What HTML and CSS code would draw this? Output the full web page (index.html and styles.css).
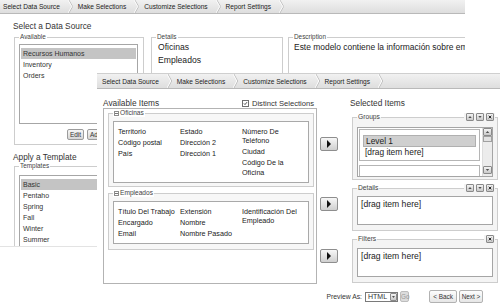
FILE: index.html
```html
<!DOCTYPE html>
<html>
<head>
<meta charset="utf-8">
<title>Report Wizard</title>
<link rel="stylesheet" href="styles.css">
</head>
<body>
<div class="win back">
    <div class="tabs">
        <div class="tab current">Select Data Source<svg class="chev" viewBox="0 0 6 14" preserveAspectRatio="none"><polyline points="1,0 5.5,7 1,14" fill="none" stroke="#b4b4b4"/><polyline points="0,0 4.5,7 0,14" fill="none" stroke="#fff"/></svg></div>
        <div class="tab">Make Selections<svg class="chev" viewBox="0 0 6 14" preserveAspectRatio="none"><polyline points="1,0 5.5,7 1,14" fill="none" stroke="#b4b4b4"/><polyline points="0,0 4.5,7 0,14" fill="none" stroke="#fff"/></svg></div>
        <div class="tab">Customize Selections<svg class="chev" viewBox="0 0 6 14" preserveAspectRatio="none"><polyline points="1,0 5.5,7 1,14" fill="none" stroke="#b4b4b4"/><polyline points="0,0 4.5,7 0,14" fill="none" stroke="#fff"/></svg></div>
        <div class="tab">Report Settings<svg class="chev" viewBox="0 0 6 14" preserveAspectRatio="none"><polyline points="1,0 5.5,7 1,14" fill="none" stroke="#b4b4b4"/><polyline points="0,0 4.5,7 0,14" fill="none" stroke="#fff"/></svg></div>
    </div>
    <div class="page">
        <h2 class="title">Select a Data Source</h2>
        <div class="source-row">
            <fieldset class="box available">
                <legend>Available</legend>
                <ul class="list ds-list">
                    <li class="sel">Recursos Humanos</li>
                    <li>Inventory</li>
                    <li>Orders</li>
                </ul>
                <div class="list-btns">
                    <button class="btn edit">Edit</button>
                    <button class="btn">Add</button>
                </div>
            </fieldset>
            <fieldset class="box details">
                <legend>Details</legend>
                <div class="line">Oficinas</div>
                <div class="line">Empleados</div>
            </fieldset>
            <fieldset class="box desc">
                <legend>Description</legend>
                <div class="line">Este modelo contiene la información sobre empleados y oficinas.</div>
            </fieldset>
        </div>
        <h2 class="title">Apply a Template</h2>
        <fieldset class="box templates">
            <legend>Templates</legend>
            <ul class="list tpl-list">
                <li class="sel">Basic</li>
                <li>Pentaho</li>
                <li>Spring</li>
                <li>Fall</li>
                <li>Winter</li>
                <li>Summer</li>
            </ul>
        </fieldset>
    </div>
</div>

<div class="win front">
    <div class="tabs">
        <div class="tab">Select Data Source<svg class="chev" viewBox="0 0 6 14" preserveAspectRatio="none"><polyline points="1,0 5.5,7 1,14" fill="none" stroke="#b4b4b4"/><polyline points="0,0 4.5,7 0,14" fill="none" stroke="#fff"/></svg></div>
        <div class="tab current">Make Selections<svg class="chev" viewBox="0 0 6 14" preserveAspectRatio="none"><polyline points="1,0 5.5,7 1,14" fill="none" stroke="#b4b4b4"/><polyline points="0,0 4.5,7 0,14" fill="none" stroke="#fff"/></svg></div>
        <div class="tab">Customize Selections<svg class="chev" viewBox="0 0 6 14" preserveAspectRatio="none"><polyline points="1,0 5.5,7 1,14" fill="none" stroke="#b4b4b4"/><polyline points="0,0 4.5,7 0,14" fill="none" stroke="#fff"/></svg></div>
        <div class="tab">Report Settings<svg class="chev" viewBox="0 0 6 14" preserveAspectRatio="none"><polyline points="1,0 5.5,7 1,14" fill="none" stroke="#b4b4b4"/><polyline points="0,0 4.5,7 0,14" fill="none" stroke="#fff"/></svg></div>
    </div>

    <div class="wizard">
        <div class="avail-col">
            <div class="col-head">
                <span>Available Items</span>
                <label class="distinct"><span class="check"><svg viewBox="0 0 7 7"><polyline points="1.3,3.4 2.8,5 5.6,1.6" fill="none" stroke="#222" stroke-width="1.1"/></svg></span>Distinct Selections</label>
            </div>
            <div class="items-panel">
                <fieldset class="box table oficinas">
                    <legend><span class="toggle"></span>Oficinas</legend>
                    <div class="fields">
                        <div class="fcol">
                            <div>Territorio</div>
                            <div>Código postal</div>
                            <div>País</div>
                        </div>
                        <div class="fcol">
                            <div>Estado</div>
                            <div>Dirección 2</div>
                            <div>Dirección 1</div>
                        </div>
                        <div class="fcol">
                            <div>Número De Teléfono</div>
                            <div>Ciudad</div>
                            <div>Código De la Oficina</div>
                        </div>
                    </div>
                </fieldset>
                <fieldset class="box table empleados">
                    <legend><span class="toggle"></span>Empleados</legend>
                    <div class="fields">
                        <div class="fcol">
                            <div>Título Del Trabajo</div>
                            <div>Encargado</div>
                            <div>Email</div>
                        </div>
                        <div class="fcol">
                            <div>Extensión</div>
                            <div>Nombre</div>
                            <div>Nombre Pasado</div>
                        </div>
                        <div class="fcol">
                            <div>Identificación Del Empleado</div>
                        </div>
                    </div>
                </fieldset>
            </div>
        </div>

        <div class="arrows">
            <button class="arrow a-groups"><svg viewBox="0 0 6 8"><polygon points="1,0 5,4 1,8" fill="#111"/></svg></button>
            <button class="arrow a-details"><svg viewBox="0 0 6 8"><polygon points="1,0 5,4 1,8" fill="#111"/></svg></button>
            <button class="arrow a-filters"><svg viewBox="0 0 6 8"><polygon points="1,0 5,4 1,8" fill="#111"/></svg></button>
        </div>

        <div class="sel-col">
            <div class="col-head">Selected Items</div>

            <fieldset class="box zone groups">
                <legend>Groups</legend>
                <div class="zone-tools">
                    <span class="tool"><svg viewBox="0 0 7 7"><polygon points="1.5,4.5 3.5,2.5 5.5,4.5" fill="#222"/></svg></span>
                    <span class="tool"><svg viewBox="0 0 7 7"><polygon points="1.5,2.5 3.5,4.5 5.5,2.5" fill="#222"/></svg></span>
                    <span class="tool"><svg viewBox="0 0 7 7"><path d="M2,2 L5,5 M5,2 L2,5" stroke="#222" stroke-width="1.1"/></svg></span>
                </div>
                <div class="pane">
                    <div class="levels">
                        <div class="level">
                            <div class="level-name">Level 1</div>
                            <div class="drop">[drag item here]</div>
                        </div>
                        <div class="level"></div>
                    </div>
                    <div class="scroll">
                        <span class="sbtn"><svg viewBox="0 0 7 7"><polygon points="1.5,4.5 3.5,2.5 5.5,4.5" fill="#222"/></svg></span>
                        <span class="thumb"></span>
                        <span class="sbtn"><svg viewBox="0 0 7 7"><polygon points="1.5,2.5 3.5,4.5 5.5,2.5" fill="#222"/></svg></span>
                    </div>
                </div>
            </fieldset>

            <fieldset class="box zone details-zone">
                <legend>Details</legend>
                <div class="zone-tools">
                    <span class="tool"><svg viewBox="0 0 7 7"><polygon points="1.5,4.5 3.5,2.5 5.5,4.5" fill="#222"/></svg></span>
                    <span class="tool"><svg viewBox="0 0 7 7"><polygon points="1.5,2.5 3.5,4.5 5.5,2.5" fill="#222"/></svg></span>
                    <span class="tool"><svg viewBox="0 0 7 7"><path d="M2,2 L5,5 M5,2 L2,5" stroke="#222" stroke-width="1.1"/></svg></span>
                </div>
                <div class="drop-box">[drag item here]</div>
            </fieldset>

            <fieldset class="box zone filters">
                <legend>Filters</legend>
                <div class="zone-tools">
                    <span class="tool"><svg viewBox="0 0 7 7"><path d="M2,2 L5,5 M5,2 L2,5" stroke="#222" stroke-width="1.1"/></svg></span>
                </div>
                <div class="drop-box">[drag item here]</div>
            </fieldset>
        </div>
    </div>

    <div class="footer">
        <span class="preview">Preview As:</span>
        <span class="select">HTML<span class="drop-arrow"><svg viewBox="0 0 7 7"><polygon points="1.5,2.5 3.5,4.5 5.5,2.5" fill="#222"/></svg></span></span>
        <button class="btn go" disabled>Go</button>
        <button class="btn nav back-btn">&lt; Back</button>
        <button class="btn nav">Next &gt;</button>
    </div>
</div>
</body>
</html>
```

FILE: styles.css
```css
* {
    box-sizing: border-box;
}
body {
    margin: 0;
    width: 500px;
    height: 308px;
    overflow: hidden;
    position: relative;
    background: #fff;
    font-family: "Liberation Sans", Arial, sans-serif;
    color: #333;
}
.win {
    background: #fff;
    overflow: hidden;
}

/* wizard step bar */
.tabs {
    display: flex;
    height: 14px;
    padding-left: 3px;
    background: linear-gradient(#f1f1f1, #dedede);
    border-bottom: 1px solid #b9b9b9;
    font-size: 6.6px;
    white-space: nowrap;
}
.tab {
    display: flex;
    align-items: center;
    color: #222;
}
.chev {
    width: 5px;
    height: 100%;
    margin: 0 5px 0 8px;
}

/* shared fieldset look */
.box {
    flex: none;
    margin: 0;
    padding: 0;
    border: 1px solid #cdcdcd;
    min-width: 0;
}
.box legend {
    margin-left: 4px;
    padding: 0 1px;
    font-size: 6.4px;
    line-height: 8px;
    color: #444;
}
.list {
    margin: 0;
    list-style: none;
    padding: 3px 1px;
    border: 1px solid #a6a6a6;
    background: #fff;
    font-size: 7px;
}
.list li {
    height: 11px;
    line-height: 11px;
    padding-left: 2px;
    white-space: nowrap;
}
.list li.sel {
    background: #c4c4c4;
}
.btn {
    font-family: "Liberation Sans", Arial, sans-serif;
    font-size: 6.4px;
    height: 11px;
    padding: 0 2px;
    border: 1px solid #9c9c9c;
    border-radius: 2px;
    background: linear-gradient(#f6f6f6, #d6d6d6);
    color: #333;
    white-space: nowrap;
}

/* step 1 (behind) */
.back {
    width: 465px;
    height: 247px;
    border-bottom: 1px solid #e3e3e3;
}
.page {
    padding-left: 13px;
}
.title {
    margin: 7px 0 0;
    font-size: 8.3px;
    line-height: 10px;
    font-weight: normal;
    color: #333;
}
.source-row {
    display: flex;
    align-items: flex-start;
    margin-top: 2px;
}
.available {
    margin-left: 1px;
    width: 130px;
    height: 112px;
}
.ds-list {
    margin: 3px 0 0 4px;
    width: 119px;
    height: 80px;
}
.list-btns {
    display: flex;
    gap: 3px;
    margin: 5px 0 0 52px;
}
.edit {
    width: 17px;
}
.details {
    margin-left: 7px;
    width: 132px;
    height: 112px;
}
.desc {
    margin-left: 5px;
    width: 260px;
    height: 112px;
}
.line {
    padding-left: 6px;
    font-size: 8.6px;
    line-height: 13px;
    white-space: nowrap;
    color: #222;
}
.desc .line {
    padding-left: 5px;
    font-size: 8.45px;
}
.templates {
    margin-left: 1px;
    width: 200px;
    height: 110px;
}
.tpl-list {
    margin: 5px 0 0 4px;
    height: 100px;
}

/* step 2 (front) */
.front {
    position: absolute;
    left: 97px;
    top: 73px;
    width: 403px;
    height: 235px;
}
.front .tabs {
    height: 16px;
    padding-left: 5px;
    border-top: 1px solid #cfcfcf;
}
.wizard {
    display: flex;
    align-items: flex-start;
}
.col-head {
    display: flex;
    align-items: center;
    height: 10px;
    margin-top: 9px;
    font-size: 8.3px;
    white-space: nowrap;
}
.avail-col {
    flex: none;
    margin-left: 6px;
    width: 214px;
}
.distinct {
    display: flex;
    align-items: center;
    margin-left: auto;
    margin-right: 3px;
    font-size: 7.6px;
}
.check {
    width: 7px;
    height: 7px;
    margin-right: 3px;
    border: 1px solid #6f6f6f;
    background: #fff;
    display: flex;
}
.check svg {
    width: 100%;
    height: 100%;
}
.items-panel {
    height: 176px;
    padding: 0 2px 0 4px;
    border: 1px solid #b3b3b3;
}
.table {
    width: 206px;
    background: #f7f7f7;
}
.table legend {
    display: flex;
    align-items: center;
    font-size: 6.6px;
    background: #fff;
}
.toggle {
    width: 5px;
    height: 5px;
    border: 1px solid #8c8c8c;
    background: linear-gradient(#fff 1px, #777 1px, #777 2px, #fff 2px) 0 0 / 100% 100%;
    margin-right: 1px;
}
.fields {
    display: grid;
    grid-template-columns: 62px 62px 1fr;
    margin: 4px 4px 3px;
    padding: 4.5px 4px 0;
    border: 1px solid #a9a9a9;
    background: #fff;
    font-size: 7.2px;
    line-height: 9.5px;
    color: #222;
}
.fcol div {
    margin-bottom: 1.5px;
}
.oficinas .fields {
    height: 62px;
}
.empleados {
    margin-top: 2px;
}
.empleados .fields {
    height: 43px;
    margin-bottom: 5px;
}

.arrows {
    flex: none;
    display: flex;
    flex-direction: column;
    margin-left: 3px;
    width: 18px;
}
.arrow {
    height: 14px;
    padding: 0;
    border: 1px solid #8e8e8e;
    border-radius: 2px;
    background: linear-gradient(#f7f7f7, #cfcfcf);
    display: flex;
    align-items: center;
    justify-content: center;
}
.arrow svg {
    width: 6px;
    height: 8px;
}
.a-groups {
    margin-top: 48px;
}
.a-details {
    margin-top: 46px;
}
.a-filters {
    margin-top: 38px;
}

.sel-col {
    flex: none;
    margin-left: 12px;
    width: 148px;
}
.zone {
    position: relative;
    margin-left: 2px;
    width: 146px;
    background: #f4f4f4;
}
.zone legend {
    font-size: 6.7px;
}
.groups {
    margin-top: 5px;
    padding-bottom: 2px;
}
.details-zone {
    margin-top: 4px;
    padding-bottom: 5px;
}
.filters {
    margin-top: 4px;
    padding-bottom: 5px;
}
.zone-tools {
    position: absolute;
    top: -8px;
    right: 2px;
    display: flex;
    gap: 2px;
    padding: 0 1px 0 2px;
    background: #f4f4f4;
}
.tool, .sbtn, .drop-arrow {
    display: flex;
    width: 8px;
    height: 8px;
    border: 1px solid #8a8a8a;
    border-radius: 1px;
    background: linear-gradient(#f3f3f3, #c9c9c9);
}
.tool svg, .sbtn svg, .drop-arrow svg {
    width: 100%;
    height: 100%;
}
.pane {
    display: flex;
    height: 50px;
    margin: 6px 4px 0;
    border: 1px solid #a5a5a5;
    background: #fff;
    overflow: hidden;
}
.levels {
    flex: 1;
    padding: 1px 2px 0 1px;
}
.level {
    height: 32px;
    padding: 5px 3px 0;
    border: 1px solid #b5b5b5;
    margin-bottom: 4px;
}
.level-name {
    height: 12px;
    padding-left: 2px;
    line-height: 11px;
    font-size: 8.4px;
    background: #cfcfcf;
    border: 1px solid #b0b0b0;
    color: #222;
}
.drop {
    padding-left: 2px;
    font-size: 8.4px;
    line-height: 11px;
    color: #222;
}
.scroll {
    display: flex;
    flex-direction: column;
    width: 10px;
    border-left: 1px solid #ddd;
    background: #ececec;
}
.scroll .sbtn {
    width: 9px;
}
.thumb {
    height: 6px;
    border: 1px solid #a0a0a0;
    background: #e2e2e2;
}
.scroll .sbtn:last-child {
    margin-top: auto;
    margin-bottom: 2px;
}
.drop-box {
    height: 29px;
    margin: 4px 4px 0;
    padding: 2px 3px 0;
    border: 1px solid #a5a5a5;
    background: #fff;
    font-size: 8.6px;
    line-height: 11px;
    color: #222;
}
.filters .drop-box {
    margin-top: 5px;
}

.footer {
    display: flex;
    align-items: center;
    justify-content: flex-end;
    height: 13px;
    margin-top: 6px;
    padding-right: 17px;
    font-size: 6.8px;
}
.preview {
    margin-right: 3px;
}
.select {
    display: flex;
    align-items: center;
    justify-content: space-between;
    width: 33px;
    height: 10px;
    padding-left: 2px;
    border: 1px solid #7a7a7a;
    background: #fff;
    font-size: 7px;
}
.select .drop-arrow {
    width: 7px;
    height: 8px;
}
.go {
    margin-left: 2px;
    width: 9px;
    padding: 0;
    color: #9a9a9a;
    border-color: #bdbdbd;
    background: #dcdcdc;
}
.nav {
    height: 13px;
    padding: 0;
    background: linear-gradient(#fdfdfd, #e6e6e6);
    border-color: #b2b2b2;
    margin-left: 2px;
    width: 24px;
}
.back-btn {
    margin-left: 20px;
    width: 28px;
}
```
